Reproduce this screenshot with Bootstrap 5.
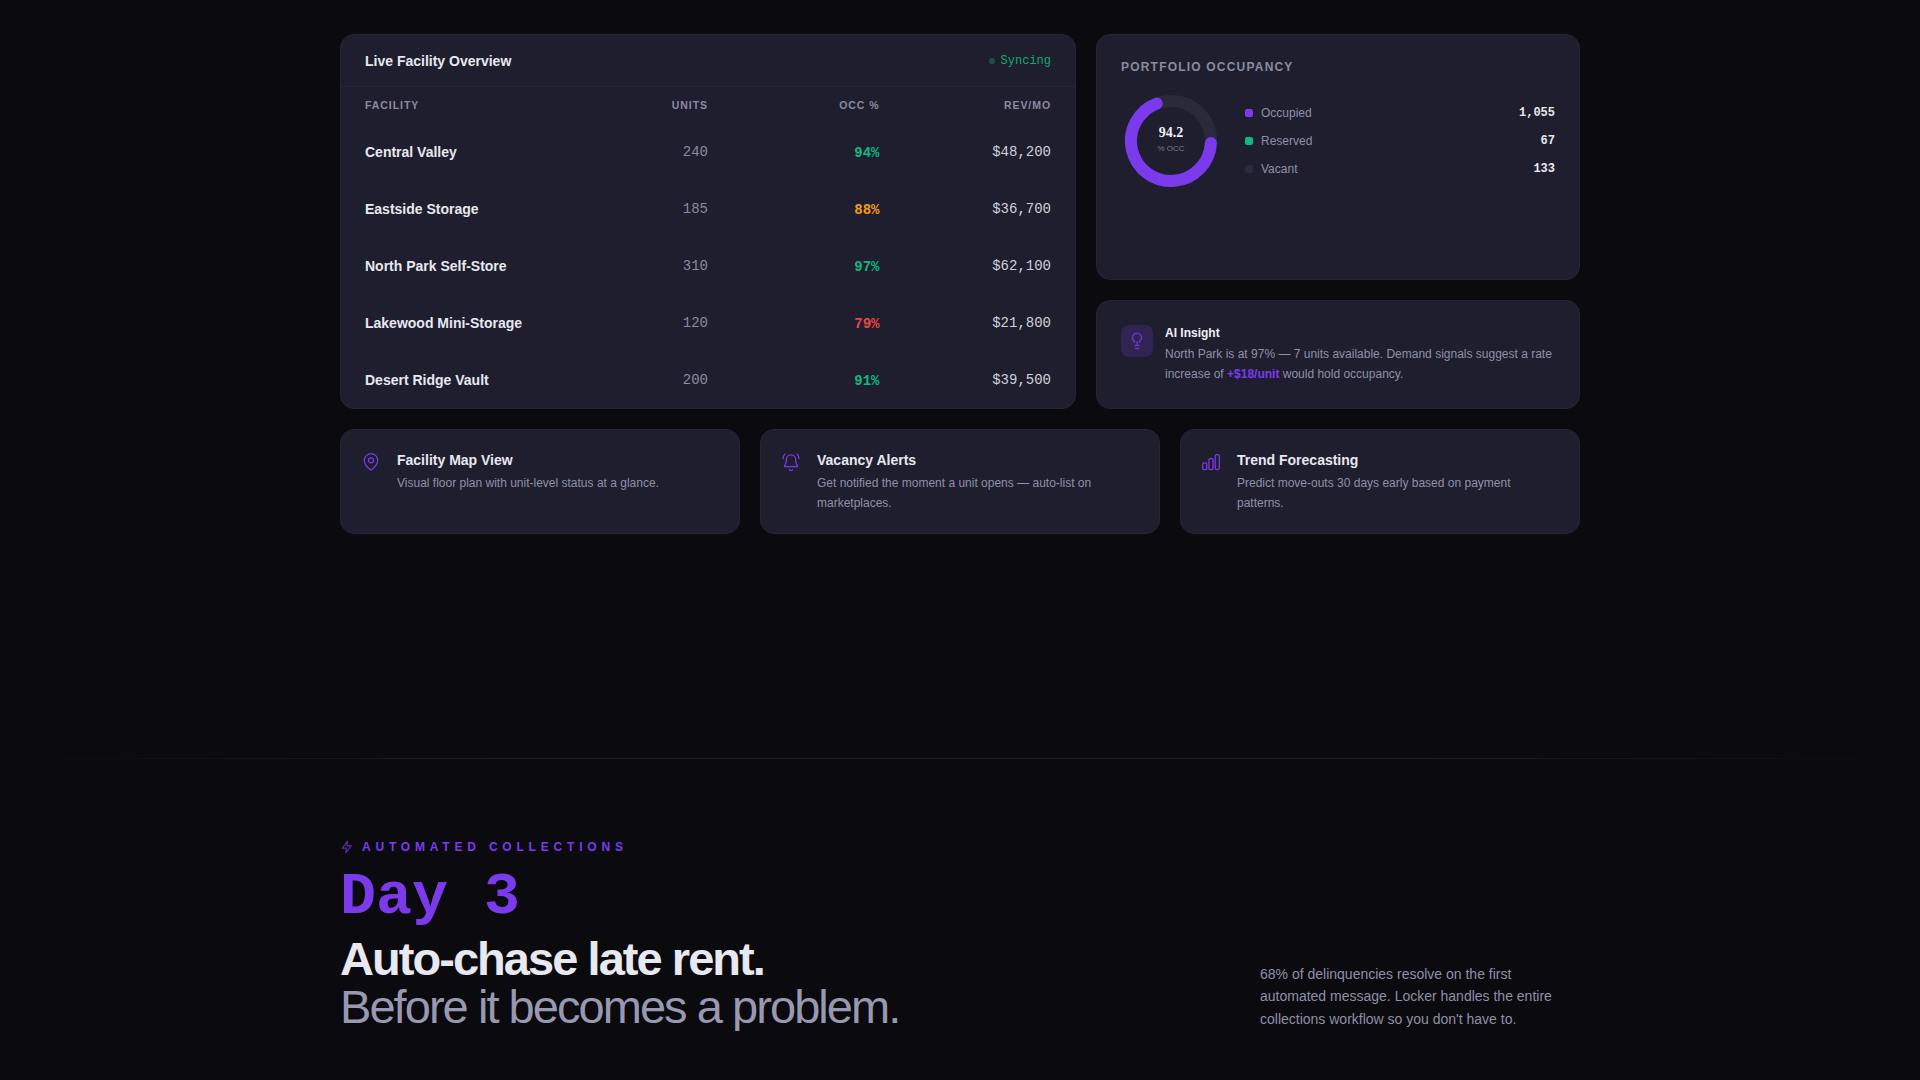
<!DOCTYPE html>
<html lang="en">
<head>
    <meta charset="UTF-8">
    <title>Locker - Facility Overview</title>
    <link href="https://cdn.jsdelivr.net/npm/bootstrap@5.3.2/dist/css/bootstrap.min.css" rel="stylesheet">
    <script src="https://cdn.jsdelivr.net/npm/bootstrap@5.3.2/dist/js/bootstrap.bundle.min.js"></script>
    <style>
        body {
            background: #0a0a0f;
            color: #e8e8f0;
            font-family: "Liberation Sans", Arial, sans-serif;
            overflow: hidden;
        }
        .mono { font-family: "Liberation Mono", "Courier New", monospace; }
        .page-wrap { width: 1240px; margin: 0 auto; padding-top: 34px; }
        .top-grid { display: grid; grid-template-columns: 736px 484px; gap: 20px; }
        .feature-grid { display: grid; grid-template-columns: repeat(3, 1fr); gap: 20px; margin-top: 20px; }
        .panel {
            background: #1e1e2e;
            border: 1px solid #252536;
            border-radius: 14px;
        }
        .fac-panel { height: 375px; }
        .panel-head { height: 52px; padding: 0 24px; border-bottom: 1px solid #252536; }
        .panel-title { font-size: 14px; font-weight: 700; color: #e8e8f0; padding-top: 1px; }
        .sync-wrap { gap: 6px; }
        .sync-label { font-size: 12px; color: #10b981; opacity: .9; }
        .sync-dot { width: 6px; height: 6px; border-radius: 50%; background: #10b981; opacity: .35; }

        .fac-body { padding: 0 24px; }
        .fac-table { width: 100%; table-layout: fixed; border-collapse: collapse; }
        .fac-table th {
            height: 37px;
            padding: 0;
            font-size: 10.5px;
            font-weight: 700;
            letter-spacing: .09em;
            color: #8b8ba0;
            text-transform: uppercase;
        }
        .fac-table td { height: 57px; padding: 0; font-size: 14px; }
        .fac-table td.fac-occ { font-weight: 700; padding-top: 2px; }
        .fac-name { font-weight: 700; color: #e8e8f0; white-space: nowrap; }
        .fac-units { color: #8b8ba0; }
        .fac-rev { color: #d0d0dc; }
        .c-green { color: #10b981; }
        .c-amber { color: #f59e0b; }
        .c-red { color: #ef4444; }

        .occ-panel { height: 246px; padding: 24px; }
        .occ-title { font-size: 12px; font-weight: 700; letter-spacing: .1em; color: #8b8ba0; margin-bottom: 20px; line-height: 16px; }
        .donut { width: 92px; height: 92px; position: relative; margin-left: 4px; flex-shrink: 0; }
        .donut-text { position: absolute; inset: 0 0 3px 0; display: flex; flex-direction: column; align-items: center; justify-content: center; }
        .donut-val { font-family: "Liberation Serif", serif; font-size: 14px; font-weight: 700; color: #f2f2f8; line-height: 16px; }
        .donut-sub { font-size: 8px; color: #7a7a8e; line-height: 12px; margin-top: 2px; }
        .legend { margin-left: 28px; margin-top: 4px; }
        .legend-row { height: 28px; font-size: 12px; color: #9090a8; }
        .legend-sq { width: 8px; height: 8px; border-radius: 2px; margin-right: 8px; }
        .sq-purple { background: #7c3aed; }
        .sq-green { background: #10b981; }
        .sq-grey { background: #2a2a3a; }
        .legend-num { font-size: 12px; font-weight: 700; color: #e8e8f0; margin-left: auto; }

        .insight-panel { height: 109px; padding: 24px; margin-top: 20px; }
        .insight-icon { width: 32px; height: 32px; border-radius: 8px; background: rgba(124, 58, 237, .2); flex-shrink: 0; margin-right: 12px; }
        .insight-icon svg { opacity: .75; }
        .insight-title { font-size: 12px; font-weight: 700; color: #f0f0f6; line-height: 16px; }
        .insight-text { font-size: 12px; line-height: 20px; color: #9090a8; margin-top: 3px; }
        .insight-text b { color: #7c3aed; }

        .feature { height: 105px; padding: 21px 24px 0 20px; }
        .feature svg { width: 20px; height: 20px; flex-shrink: 0; margin-right: 16px; margin-top: 1px; }
        .feature-title { font-size: 14px; font-weight: 700; color: #e8e8f0; line-height: 18px; }
        .feature-text { font-size: 12px; line-height: 20px; color: #9090a8; margin-top: 4px; }

        .rule {
            height: 1px;
            margin-top: 224px;
            background: linear-gradient(90deg, transparent, #1e1e30 30%, #1e1e30 70%, transparent);
        }
        .day-section { width: 1240px; margin: 0 auto; padding-top: 80px; }
        .eyebrow { font-size: 12px; font-weight: 700; letter-spacing: .4em; color: #7c3aed; line-height: 16px; }
        .eyebrow svg { width: 14px; height: 14px; margin-right: 8px; opacity: .7; }
        .day-num { font-size: 60px; font-weight: 700; color: #7c3aed; line-height: 66px; margin-top: 9px; }
        .day-head { font-size: 47px; line-height: 48px; letter-spacing: -1.95px; margin-top: 5px; }
        .day-head strong { display: block; font-weight: 700; color: #e8e8f0; }
        .day-head span { display: block; font-weight: 400; color: #9898b0; }
        .day-note { width: 320px; font-size: 14px; line-height: 22.4px; color: #9090a8; margin-bottom: 1px; }
    </style>
</head>
<body>

<div class="page-wrap">
    <div class="top-grid">
        <!-- facility table -->
        <div class="panel fac-panel overflow-hidden">
            <div class="panel-head d-flex align-items-center justify-content-between">
                <span class="panel-title">Live Facility Overview</span>
                <span class="sync-wrap d-flex align-items-center">
                    <span class="sync-dot"></span>
                    <span class="sync-label mono">Syncing</span>
                </span>
            </div>
            <div class="fac-body">
                <table class="fac-table">
                    <thead>
                        <tr>
                            <th>Facility</th>
                            <th class="text-end">Units</th>
                            <th class="text-end">Occ %</th>
                            <th class="text-end">Rev/Mo</th>
                        </tr>
                    </thead>
                    <tbody>
                        <tr><td class="fac-name">Central Valley</td><td class="fac-units mono text-end">240</td><td class="fac-occ c-green mono text-end">94%</td><td class="fac-rev mono text-end">$48,200</td></tr>
                        <tr><td class="fac-name">Eastside Storage</td><td class="fac-units mono text-end">185</td><td class="fac-occ c-amber mono text-end">88%</td><td class="fac-rev mono text-end">$36,700</td></tr>
                        <tr><td class="fac-name">North Park Self-Store</td><td class="fac-units mono text-end">310</td><td class="fac-occ c-green mono text-end">97%</td><td class="fac-rev mono text-end">$62,100</td></tr>
                        <tr><td class="fac-name">Lakewood Mini-Storage</td><td class="fac-units mono text-end">120</td><td class="fac-occ c-red mono text-end">79%</td><td class="fac-rev mono text-end">$21,800</td></tr>
                        <tr><td class="fac-name">Desert Ridge Vault</td><td class="fac-units mono text-end">200</td><td class="fac-occ c-green mono text-end">91%</td><td class="fac-rev mono text-end">$39,500</td></tr>
                    </tbody>
                </table>
            </div>
        </div>

        <div>
            <div class="panel occ-panel">
                <div class="occ-title">PORTFOLIO OCCUPANCY</div>
                <div class="d-flex">
                    <div class="donut">
                        <svg width="92" height="92" viewBox="0 0 92 92" fill="none">
                            <circle cx="46" cy="46" r="40" stroke="#2a2a3a" stroke-width="12"/>
                            <path d="M85.9 48.1A40 40 0 1 1 31.7 8.6" stroke="#7c3aed" stroke-width="12" stroke-linecap="round"/>
                        </svg>
                        <div class="donut-text">
                            <span class="donut-val">94.2</span>
                            <span class="donut-sub">% OCC</span>
                        </div>
                    </div>
                    <div class="legend flex-grow-1">
                        <div class="legend-row d-flex align-items-center"><span class="legend-sq sq-purple"></span>Occupied<span class="legend-num mono">1,055</span></div>
                        <div class="legend-row d-flex align-items-center"><span class="legend-sq sq-green"></span>Reserved<span class="legend-num mono">67</span></div>
                        <div class="legend-row d-flex align-items-center"><span class="legend-sq sq-grey"></span>Vacant<span class="legend-num mono">133</span></div>
                    </div>
                </div>
            </div>
            <div class="panel insight-panel d-flex">
                <div class="insight-icon d-flex align-items-center justify-content-center">
                    <svg width="18" height="18" viewBox="0 0 24 24" fill="none" stroke="#7c3aed" stroke-width="2" stroke-linecap="round" stroke-linejoin="round"><path d="M9 18h6M10 22h4M12 18v-5M15.1 14c.2-1 .7-1.7 1.4-2.5A6 6 0 1 0 6 8c0 1 .2 2.2 1.5 3.5.7.7 1.2 1.5 1.4 2.5"/></svg>
                </div>
                <div>
                    <div class="insight-title">AI Insight</div>
                    <div class="insight-text">North Park is at 97% — 7 units available. Demand signals suggest a rate increase of <b>+$18/unit</b> would hold occupancy.</div>
                </div>
            </div>
        </div>
    </div>

    <div class="feature-grid">
        <div class="panel feature d-flex">
            <svg viewBox="0 0 24 24" fill="none" stroke="#7c3aed" stroke-width="1.5" stroke-linecap="round" stroke-linejoin="round"><path d="M20 10c0 6-8 12-8 12s-8-6-8-12a8 8 0 0 1 16 0Z"/><circle cx="12" cy="10" r="3"/></svg>
            <div>
                <div class="feature-title">Facility Map View</div>
                <div class="feature-text">Visual floor plan with unit-level status at a glance.</div>
            </div>
        </div>
        <div class="panel feature d-flex">
            <svg viewBox="0 0 24 24" fill="none" stroke="#7c3aed" stroke-width="1.5" stroke-linecap="round" stroke-linejoin="round"><path d="M6.500 9a5.500 5.500 0 0 1 11 0c0 5 1.500 7 2.500 8.500H4C5 16 6.500 14 6.500 9"/><path d="M10 21a2.200 2.200 0 0 0 4 0"/><path d="M4.500 2.500C3.200 4 2.500 6 2.500 8M21.500 8c0-2-.7-4-2-5.500"/></svg>
            <div>
                <div class="feature-title">Vacancy Alerts</div>
                <div class="feature-text">Get notified the moment a unit opens — auto-list on marketplaces.</div>
            </div>
        </div>
        <div class="panel feature d-flex">
            <svg viewBox="0 0 24 24" fill="none" stroke="#7c3aed" stroke-width="1.5" stroke-linecap="round" stroke-linejoin="round"><rect x="2" y="13" width="5" height="8" rx="1.500"/><rect x="9.500" y="8" width="5" height="13" rx="1.500"/><rect x="17" y="3" width="5" height="18" rx="2"/></svg>
            <div>
                <div class="feature-title">Trend Forecasting</div>
                <div class="feature-text">Predict move-outs 30 days early based on payment patterns.</div>
            </div>
        </div>
    </div>
</div>

<div class="rule"></div>

<div class="day-section">
    <div class="eyebrow d-flex align-items-center">
        <svg viewBox="0 0 24 24" fill="none" stroke="#7c3aed" stroke-width="2" stroke-linejoin="round"><path d="M13 2 4 14h7l-1 8 9-12h-7l1-8Z"/></svg>
        AUTOMATED COLLECTIONS
    </div>
    <div class="day-num mono">Day 3</div>
    <div class="d-flex justify-content-between align-items-end">
        <div class="day-head">
            <strong>Auto-chase late rent.</strong>
            <span>Before it becomes a problem.</span>
        </div>
        <div class="day-note">68% of delinquencies resolve on the first automated message. Locker handles the entire collections workflow so you don't have to.</div>
    </div>
</div>

</body>
</html>
